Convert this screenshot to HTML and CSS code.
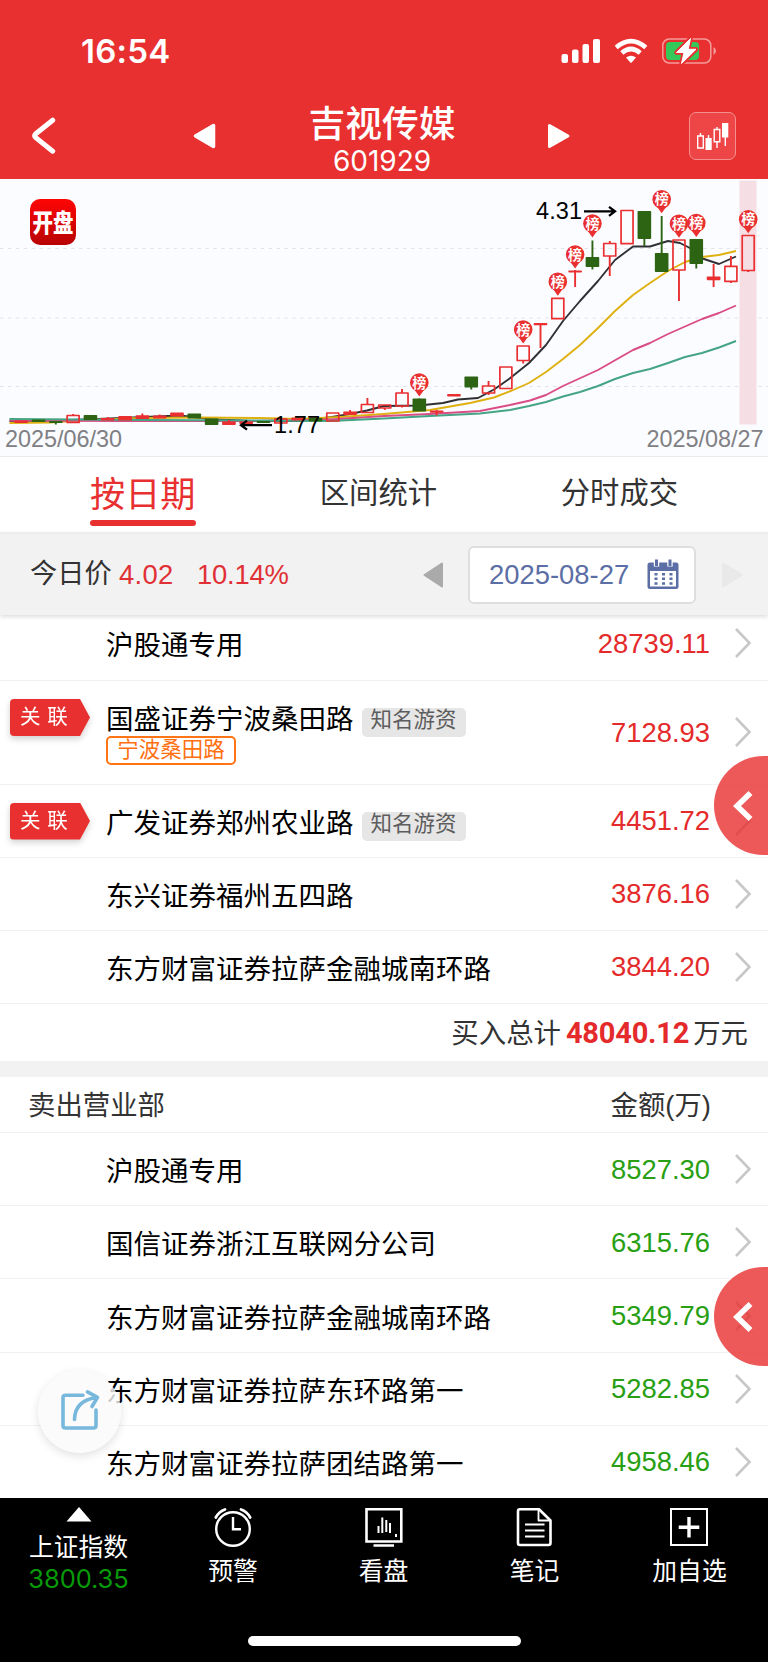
FILE: index.html
```
<!DOCTYPE html>
<html lang="zh">
<head>
    <meta charset="UTF-8">
    <meta name="viewport" content="width=device-width, initial-scale=1.0">
    <title>吉视传媒 601929</title>
    <link rel="stylesheet" href="styles.css">
</head>
<body>
<svg class="defs" width="0" height="0">
    <symbol id="arrow" viewBox="0 0 18 32"><path d="M2 2 L15.5 16 L2 30" fill="none" stroke="#c8c8c8" stroke-width="2.6"/></symbol>
</svg>

<header class="header">
    <div class="status-bar">
        <span class="time">16:54</span>
        <svg class="status-icons" width="160" height="30" viewBox="0 0 160 30">
            <!-- 信号 -->
            <g fill="#fff">
                <rect x="1.5" y="18" width="6.5" height="9" rx="2"/>
                <rect x="12" y="13.5" width="6.5" height="13.5" rx="2"/>
                <rect x="22.5" y="8" width="6.5" height="19" rx="2"/>
                <rect x="33" y="3" width="7" height="24" rx="2"/>
            </g>
            <!-- WiFi -->
            <g fill="none" stroke="#fff" stroke-width="4.6">
                <path d="M56.2 11.4 Q71 -1.2 85.8 11.4"/>
                <path d="M61.8 17 Q71 9 80.2 17"/>
            </g>
            <path d="M66 21.6 Q71 17.8 76 21.6 L71.7 26.5 Q71 27.2 70.3 26.5Z" fill="#fff"/>
            <!-- 电池 -->
            <rect x="102.8" y="3" width="48" height="24" rx="6.5" fill="none" stroke="#f59a9a" stroke-width="1.5"/>
            <rect x="106" y="6" width="33" height="18" rx="4" fill="#34c759"/>
            <path d="M153.5 11 Q156 12.5 156 15 Q156 17.5 153.5 19Z" fill="#f59a9a"/>
            <path d="M130.5 2.5 L116.5 16.5 H124 L121.5 27.5 L136 13.3 H128.2Z" fill="#fff" stroke="#e93030" stroke-width="4.5" stroke-linejoin="round"/>
            <path d="M130.5 2.5 L116.5 16.5 H124 L121.5 27.5 L136 13.3 H128.2Z" fill="#fff" stroke="#fff" stroke-width="1" stroke-linejoin="round"/>
        </svg>
    </div>
    <div class="nav-bar">
        <svg class="back" width="24" height="38" viewBox="0 0 24 38"><path d="M20.7 3.2 L3.5 17 Q1.7 18.7 3.5 20.4 L20.7 34.2" fill="none" stroke="#fff" stroke-width="5" stroke-linecap="round"/></svg>
        <svg width="23" height="26" viewBox="0 0 23 26"><path d="M2.5 13 L20.5 2.5 V23.5Z" fill="#fff" stroke="#fff" stroke-width="3.5" stroke-linejoin="round"/></svg>
        <div class="stock">
            <h1 class="stock-name">吉视传媒</h1>
            <div class="stock-code">601929</div>
        </div>
        <svg width="23" height="26" viewBox="0 0 23 26"><path d="M20 13 L1.5 2.5 V23.5Z" fill="#fff" stroke="#fff" stroke-width="3" stroke-linejoin="round"/></svg>
        <div class="kline-btn">
            <svg width="33" height="29" viewBox="0 0 33 29">
                <g fill="none" stroke="#fff" stroke-width="1.4">
                    <path d="M4.5 11 V14 M1.7 14 H7.3 V26 H1.7Z M12.5 13 V16 M21 5 V7.5 M21 20 V26 M18.2 7.5 H23.8 V19.7 H18.2Z M29.3 15 V24"/>
                </g>
                <path d="M9.5 16 H15.7 V28 H9.5Z M26 1 H32.3 V15.5 H26Z" fill="#fff"/>
            </svg>
        </div>
    </div>
</header>

<section class="chart">
    <svg id="kline" width="768" height="276" viewBox="0 4 768 276">
        <defs>
            <linearGradient id="logo" x1="0" y1="0" x2="0" y2="1">
                <stop offset="0" stop-color="#ff0505"/>
                <stop offset="1" stop-color="#b80404"/>
            </linearGradient>
        </defs>
        <path class="grid-line" d="M0 72.5 H768 M0 142 H768 M0 210.5 H768"/>
        <rect x="739.5" y="4.5" width="17" height="244" fill="#f6dfe4"/>
        <rect x="30" y="23" width="46" height="46" rx="10" fill="url(#logo)"/>
        <text class="logo-text" transform="translate(32.6 55.5) scale(1 1.22)">开盘</text>
        <polyline class="ma" stroke="#303034" points="9.5,245 60,244.5 110,242.5 145,241 180,239.5 210,243 250,245 300,245 332,241 350,238 367,234.5 384,230 419,229.5 443,227 458,223.5 478,222 494,213.5 509,203 529,187 546,169 563,145 580,125 598,105 615,84 633,70.5 650,70.5 668,65 680,67 690,72 701,82 719,88 736,80.5"/>
        <polyline class="ma" stroke="#deb010" points="9.5,247 50,246.5 80,244.5 140,242 200,241.5 260,242 300,243 340,241 384,238 430,234 470,227 494,221.5 512,214.5 529,207 546,196 563,183 580,169 598,152 615,135 633,119 650,107 668,95 685,86 702,81 719,79 736,75"/>
        <polyline class="ma" stroke="#d94c86" points="9.5,244.5 120,245 250,245 330,243.5 384,240 430,238 480,235 510,229 530,224.5 546,219 563,210 598,194 633,174 650,167 668,158 702,143 719,137 736,129.5"/>
        <polyline class="ma" stroke="#45a484" points="9.5,243 150,244 250,244.5 330,245 384,242.5 430,240 480,237.5 510,234 529,230 546,226 563,220.5 580,216 598,210 615,203 633,197 650,193 668,187 685,181 702,177 719,171.5 736,165"/>
        <g id="candles"></g>
        <path class="pointer" d="M241 249.2 H272 M247 244.7 L241 249.2 L247 253.7"/>
        <text class="price" x="274" y="257">1.77</text>
        <path class="pointer" d="M584 35.3 H615 M609 30.8 L615 35.3 L609 39.8"/>
        <text class="price" x="536" y="43.3">4.31</text>
        <text class="day" x="5" y="271">2025/06/30</text>
        <text class="day" x="763.5" y="271" text-anchor="end">2025/08/27</text>
    </svg>
</section>

<nav class="tabs">
    <a class="tab active">按日期</a>
    <a class="tab">区间统计</a>
    <a class="tab">分时成交</a>
</nav>

<div class="filter">
    <span class="today">今日价</span>
    <span class="today-price">4.02</span>
    <span class="today-rate">10.14%</span>
    <svg class="prev" width="21" height="26" viewBox="0 0 21 26"><path d="M1.5 13 L19 1.5 V24.5Z" fill="#aaa" stroke="#aaa" stroke-width="2" stroke-linejoin="round"/></svg>
    <div class="date-box">
        <span>2025-08-27</span>
        <svg width="32" height="31" viewBox="0 0 32 31">
            <path d="M3 3.5 H29 Q31.5 3.5 31.5 6 V27.5 Q31.5 30 29 30 H3 Q0.5 30 0.5 27.5 V6 Q0.5 3.5 3 3.5Z" fill="#5b6ea5"/>
            <rect x="3" y="12" width="26" height="15.5" fill="#fff"/>
            <path d="M9.5 0.5 V7.5 M23 0.5 V7.5" stroke="#fff" stroke-width="5.4"/>
            <path d="M9.5 0.5 V7 M23 0.5 V7" stroke="#5b6ea5" stroke-width="3"/>
            <path d="M7.5 15.3 H26 M7.5 19.8 H26 M7.5 24.5 H26" stroke="#5b6ea5" stroke-width="2.6" stroke-dasharray="3 4.5"/>
        </svg>
    </div>
    <svg class="next" width="21" height="26" viewBox="0 0 21 26"><path d="M20 13 L1 1.5 V24.5Z" fill="#e9e9e9" stroke="#e9e9e9" stroke-width="2" stroke-linejoin="round"/></svg>
</div>

<main>
    <section class="buy">
        <div class="row first">
            <div class="name">沪股通专用</div>
            <div class="amount">28739.11</div>
            <svg class="arrow"><use href="#arrow"/></svg>
        </div>
        <div class="row tall">
            <div class="flag"><span>关 联</span></div>
            <div class="name">国盛证券宁波桑田路<span class="tag">知名游资</span><div class="alias">宁波桑田路</div></div>
            <div class="amount">7128.93</div>
            <svg class="arrow"><use href="#arrow"/></svg>
        </div>
        <div class="row">
            <div class="flag"><span>关 联</span></div>
            <div class="name">广发证券郑州农业路<span class="tag">知名游资</span></div>
            <div class="amount">4451.72</div>
            <svg class="arrow"><use href="#arrow"/></svg>
        </div>
        <div class="row">
            <div class="name">东兴证券福州五四路</div>
            <div class="amount">3876.16</div>
            <svg class="arrow"><use href="#arrow"/></svg>
        </div>
        <div class="row">
            <div class="name">东方财富证券拉萨金融城南环路</div>
            <div class="amount">3844.20</div>
            <svg class="arrow"><use href="#arrow"/></svg>
        </div>
        <div class="total">买入总计<b>48040.12</b>万元</div>
    </section>

    <section class="sell">
        <div class="section-head"><span>卖出营业部</span><span>金额(万)</span></div>
        <div class="row">
            <div class="name">沪股通专用</div>
            <div class="amount">8527.30</div>
            <svg class="arrow"><use href="#arrow"/></svg>
        </div>
        <div class="row">
            <div class="name">国信证券浙江互联网分公司</div>
            <div class="amount">6315.76</div>
            <svg class="arrow"><use href="#arrow"/></svg>
        </div>
        <div class="row">
            <div class="name">东方财富证券拉萨金融城南环路</div>
            <div class="amount">5349.79</div>
            <svg class="arrow"><use href="#arrow"/></svg>
        </div>
        <div class="row">
            <div class="name">东方财富证券拉萨东环路第一</div>
            <div class="amount">5282.85</div>
            <svg class="arrow"><use href="#arrow"/></svg>
        </div>
        <div class="row">
            <div class="name">东方财富证券拉萨团结路第一</div>
            <div class="amount">4958.46</div>
            <svg class="arrow"><use href="#arrow"/></svg>
        </div>
    </section>
</main>

<footer class="bottom-bar">
    <div class="index">
        <svg width="26" height="15" viewBox="0 0 26 15"><path d="M13 0 L25.5 14.5 H0.5Z" fill="#fff"/></svg>
        <div class="index-name">上证指数</div>
        <div class="index-value">3800.35</div>
    </div>
    <div class="item">
        <svg width="40" height="40" viewBox="0 0 40 40" fill="none" stroke="#fff" stroke-width="2.4" stroke-linecap="round">
            <circle cx="20" cy="22" r="16.8"/>
            <path d="M20 10 V22.3 H28" stroke-linecap="butt"/>
            <path d="M2.8 10.5 Q6 4.5 12 2.5 M28 2.5 Q34 4.5 37.2 10.5" stroke-width="2.8"/>
        </svg>
        <span>预警</span>
    </div>
    <div class="item">
        <svg width="40" height="40" viewBox="0 0 40 40" fill="none" stroke="#fff" stroke-width="2.6">
            <path d="M2.5 2.3 H37.3 V34.5 H2.5Z M9.5 38.5 H30"/>
            <path d="M14.5 19 V26 M18.3 10.5 V26 M22.3 13 V25 M26 16 V26 M32 27 V30" stroke-width="2"/>
        </svg>
        <span>看盘</span>
    </div>
    <div class="item">
        <svg width="40" height="40" viewBox="0 0 40 40" fill="none" stroke="#fff" stroke-width="2.6" stroke-linejoin="round">
            <path d="M5 2.2 H24 L35.5 13.5 V36 Q35.5 38 33.5 38 H5 Q3 38 3 36 V4.2 Q3 2.2 5 2.2Z"/>
            <path d="M23.5 3 V13.5 H35" stroke-width="1.8"/>
            <path d="M10 17.5 H29.5 M10 23.5 H29.5 M10 29.5 H29.5" stroke-width="2"/>
        </svg>
        <span>笔记</span>
    </div>
    <div class="item">
        <svg width="40" height="40" viewBox="0 0 40 40" fill="none" stroke="#fff">
            <rect x="1" y="2" width="36" height="36" stroke-width="2"/>
            <path d="M19 10 V30.5 M8.7 20.3 H29.3" stroke-width="3.4"/>
        </svg>
        <span>加自选</span>
    </div>
    <div class="home-line"></div>
</footer>

<!-- 悬浮按钮 -->
<div class="side-btn side-top"><svg width="20" height="32" viewBox="0 0 20 32"><path d="M17.5 3 L4 16 L17.5 29" fill="none" stroke="#fff" stroke-width="5.6"/></svg></div>
<div class="side-btn side-bottom"><svg width="20" height="32" viewBox="0 0 20 32"><path d="M17.5 3 L4 16 L17.5 29" fill="none" stroke="#fff" stroke-width="5.6"/></svg></div>
<div class="share">
    <svg width="40" height="42" viewBox="0 0 40 42" fill="none" stroke="#78b8dc" stroke-width="3.6" stroke-linecap="round" stroke-linejoin="round">
        <path d="M23 6.2 H5.5 Q3 6.2 3 8.7 V36.5 Q3 39 5.5 39 H33.5 Q36 39 36 36.5 V21"/>
        <path d="M14.5 30.5 Q15 11 37 8.5 M27.5 2.8 L37.5 8.3 L32 17.5"/>
    </svg>
</div>

<script>
// [颜色, 实体顶, 实体底, 最高, 最低, 空心, 标记]
const data = [
    ["r", 244.5, 247], ["g", 243.5, 246], ["g", 245, 247, 245, 248.5],
    ["r", 239.5, 246.5, 238, 247, 1], ["g", 239, 244], ["r", 242, 244.5, 241, 244],
    ["r", 240, 244.5], ["r", 239.3, 243, 237.5, 243], ["r", 239.5, 242.5, 238.5, 242],
    ["r", 236.5, 240.5], ["g", 237.5, 242.5], ["g", 242.5, 249], ["r", 245.5, 249, 244, 249],
    ["r", 245.5, 248], ["g", 245, 247], ["r", 243, 247, 242, 248, 1], ["r", 241.5, 244.5],
    ["g", 242, 245.5], ["r", 237, 245, 237, 245, 1], ["r", 235.5, 239, 234, 239],
    ["r", 228.5, 236.5, 222, 237, 1], ["r", 229, 232, 229, 234, 1], ["r", 217, 230, 213, 231.5, 1],
    ["g", 222.5, 235.5, 222.5, 235, 0, 206.5], ["r", 234.5, 236.8, 234, 239.5], ["r", 218, 220.5],
    ["g", 200.5, 211.5, 201, 213.5], ["r", 210, 217, 205, 219, 1], ["r", 191, 212.5, 191, 212, 1],
    ["r", 170, 184.5, 170, 187.5, 1, 153.5], ["r", 147, 149.3, 147, 172], ["r", 122.3, 142.7, 123, 142, 1, 105.7],
    ["r", 94.5, 96.5, 94, 111, 0, 78.5], ["g", 81, 91, 64.5, 93.5, 0, 47.5], ["r", 67.5, 80, 65, 100, 1],
    ["r", 34.5, 67.7, 35, 67, 1], ["g", 35, 63, 35, 70], ["g", 77, 96, 40, 96, 0, 23.3],
    ["r", 64, 94, 64, 125, 1, 47.7], ["g", 63, 88, 63, 92.5, 0, 47], ["r", 100.5, 104.3, 88, 111],
    ["r", 90.3, 105.3, 80, 107, 1], ["r", 59.5, 94.5, 59, 96, 1, 43.3]
];
const colors = { r: "#e92f30", g: "#2d6413" };
let svg = "";
data.forEach(([c, top, bottom, high, low, hollow, mark], i) => {
    const x = 21.2 + 17.31 * i;
    const color = colors[c];
    if (high !== undefined) {
        // 空心实体不画穿过中间的影线
        const d = hollow ? `M${x} ${high} V${top} M${x} ${bottom} V${low}` : `M${x} ${high} V${low}`;
        svg += `<path d="${d}" stroke="${color}" stroke-width="1.9"/>`;
    }
    if (hollow) {
        svg += `<rect x="${x - 6}" y="${top}" width="12" height="${bottom - top}" fill="none" stroke="${color}" stroke-width="1.7" stroke-linejoin="round"/>`;
    } else {
        svg += `<rect x="${x - 6.8}" y="${top}" width="13.6" height="${bottom - top}" rx="0.8" fill="${color}"/>`;
    }
    if (mark) {
        svg += `<circle cx="${x}" cy="${mark}" r="9.3" fill="#e92f30"/>
            <path d="M${x - 5} ${mark + 7} L${x} ${mark + 14} L${x + 5} ${mark + 7}Z" fill="#e92f30"/>
            <text class="mark" x="${x}" y="${mark + 5}">榜</text>`;
    }
});
document.getElementById("candles").innerHTML = svg;
</script>
</body>
</html>
```

FILE: styles.css
```
* {
    box-sizing: border-box;
}
body {
    position: relative;
    width: 768px;
    height: 1663px;
    margin: 0;
    overflow: hidden;
    background: #fff;
    color: #000;
    font-family: "Liberation Sans", "Noto Sans CJK SC", sans-serif;
    font-size: 27.4px;
}
svg {
    display: block;
    flex: none;
}
.defs {
    position: absolute;
}

/* 顶部 */
.header {
    height: 179px;
    background: #e93030;
    color: #fff;
}
.status-bar {
    display: flex;
    justify-content: space-between;
    height: 98px;
    padding: 36px 48px 0 81px;
}
.time {
    font: 600 33px/30px Inter, sans-serif;
    letter-spacing: 0.2px;
}
.nav-bar {
    display: flex;
    align-items: center;
    height: 76px;
    padding: 0 32px;
}
.back {
    margin-right: 137px;
}
.stock {
    flex: 1;
    padding-top: 8px;
    text-align: center;
}
.stock-name {
    margin: 0;
    font-size: 36.8px;
    font-weight: 500;
    line-height: 42px;
}
.stock-code {
    font: 400 28px/30px Inter, sans-serif;
    letter-spacing: 0;
}
.kline-btn {
    display: flex;
    align-items: center;
    justify-content: center;
    width: 47px;
    height: 48px;
    margin-left: 118px;
    border: 1px solid #f58f8f;
    border-radius: 7px;
    background: #ee4646;
}

/* K线图 */
.chart {
    height: 278px;
    padding-top: 1px;
    border-bottom: 1px solid #ebebed;
    background: #fbfcff;
}
.grid-line {
    stroke: #e2e3e8;
    stroke-width: 1;
    stroke-dasharray: 3.5 4.4;
}
.ma {
    fill: none;
    stroke-width: 1.9;
    stroke-linejoin: round;
}
.pointer {
    fill: none;
    stroke: #000;
    stroke-width: 2.3;
}
.price {
    font-size: 23.5px;
    letter-spacing: 0.1px;
}
.day {
    fill: #808084;
    font-size: 23.4px;
}
.logo-text {
    fill: #fff;
    font-size: 20.5px;
    font-weight: 900;
}
.mark {
    fill: #fff;
    font-size: 14px;
    font-weight: 700;
    text-anchor: middle;
}

/* 标签 */
.tabs {
    display: flex;
    height: 75px;
    padding: 0 90px;
    justify-content: space-between;
}
.tab {
    padding-top: 13px;
    color: #333;
    font-size: 29.3px;
    line-height: 46px;
}
.tab.active {
    display: flex;
    flex-direction: column;
    width: 106px;
    height: 69px;
    color: #e93030;
    font-size: 35.2px;
    line-height: 50px;
    white-space: nowrap;
}
.tab.active::after {
    content: "";
    height: 6px;
    border-radius: 3px;
    background: #e93030;
}

/* 日期栏 */
.filter {
    position: relative;
    display: flex;
    align-items: center;
    height: 83px;
    padding-left: 30px;
    border-top: 2px solid #ededed;
    background: #f2f2f2;
    box-shadow: 0 2px 4px rgba(0, 0, 0, 0.13);
    color: #e13035;
}
.today {
    width: 89px;
    color: #333;
    font-size: 27.2px;
    line-height: 36px;
    padding-bottom: 1px;
}
.today-price {
    width: 78px;
    padding-top: 1px;
    letter-spacing: 0.3px;
}
.today-rate {
    padding-top: 1px;
    letter-spacing: -0.2px;
}
.prev {
    margin-left: auto;
}
.date-box {
    display: flex;
    align-items: center;
    justify-content: space-between;
    width: 228px;
    height: 58px;
    margin: 0 26px 0 24px;
    padding: 1px 15px 1px 19px;
    border: 2px solid #dedede;
    border-radius: 6px;
    background: #fff;
    color: #5b6ea5;
}
.next {
    margin-right: 25px;
}

/* 列表 */
.row {
    position: relative;
    display: flex;
    align-items: center;
    height: 73.1px;
    padding-left: 106px;
    padding-right: 16px;
    border-bottom: 1.5px solid #f2f2f2;
}
.row.first {
    height: 66px;
    padding-bottom: 9px;
}
.row.tall {
    height: 103.5px;
}
.name {
    flex: 1;
    padding-top: 6px;
    font-size: 27.5px;
    line-height: 36px;
    white-space: nowrap;
}
.tall .name {
    padding-top: 2px;
}
.amount {
    margin-right: 24px;
    padding-top: 1px;
    color: #e42a2b;
}
.sell .amount {
    color: #299f13;
}
.arrow {
    width: 18px;
    height: 32px;
}
.tag {
    display: inline-block;
    height: 29px;
    margin-left: 8px;
    padding: 0 9px;
    border-radius: 5px;
    background: #e6e6e6;
    color: #5d5d5d;
    font-size: 21.5px;
    line-height: 25px;
    vertical-align: 1.5px;
}
.alias {
    width: 130px;
    height: 29px;
    margin-top: -2px;
    border: 2px solid #ff7414;
    border-radius: 5px;
    color: #ff7010;
    font-size: 21.5px;
    line-height: 25px;
    text-align: center;
}
/* 角标挂在名称左侧 */
.flag {
    position: absolute;
    left: 10px;
    top: 18px;
    filter: drop-shadow(0 3px 3px rgba(0, 0, 0, 0.18));
}
.flag span {
    display: block;
    width: 80px;
    height: 37px;
    padding-left: 10px;
    border-radius: 4px;
    background: #e93030;
    clip-path: polygon(0 0, 70px 0, 80px 50%, 70px 100%, 0 100%);
    color: #fff;
    font-size: 20.5px;
    line-height: 36px;
    word-spacing: 1px;
    white-space: pre;
}
.total {
    height: 57.5px;
    padding-right: 20px;
    color: #333;
    line-height: 60px;
    text-align: right;
}
.total b {
    margin: 0 4px 0 5px;
    color: #e42a2b;
    font: 700 29px/50px Roboto, sans-serif;
    letter-spacing: -0.2px;
}
.sell {
    border-top: 16px solid #f2f2f2;
}
.section-head {
    display: flex;
    justify-content: space-between;
    height: 56px;
    padding: 0 57px 0 28px;
    border-bottom: 1.5px solid #f2f2f2;
    color: #333;
    line-height: 58px;
}

/* 底部 */
.bottom-bar {
    position: absolute;
    left: 0;
    top: 1498px;
    width: 768px;
    height: 164px;
    display: grid;
    grid-template-columns: 157px 152px 149px 153px 157px;
    background: #000;
    color: #fff;
    font-size: 24.8px;
    text-align: center;
}
.index {
    display: flex;
    flex-direction: column;
    align-items: center;
    padding-top: 9px;
}
.index-name {
    margin-top: 8px;
    line-height: 36px;
}
.index-value {
    color: #089a08;
    font: 400 25.5px/25px Inter, sans-serif;
    letter-spacing: -0.1px;
}
.item {
    display: flex;
    flex-direction: column;
    align-items: center;
    padding-top: 9px;
}
.item span {
    margin-top: 7px;
    line-height: 36px;
}
.home-line {
    position: absolute;
    left: 248px;
    top: 138px;
    width: 273px;
    height: 10px;
    border-radius: 5px;
    background: #fff;
}

/* 悬浮 */
.side-btn {
    position: absolute;
    right: 0;
    display: flex;
    align-items: center;
    width: 54px;
    height: 99px;
    padding-left: 19px;
    border-radius: 50px 0 0 50px;
    background: rgba(233, 48, 48, 0.8);
}
.side-top {
    top: 756px;
}
.side-bottom {
    top: 1267px;
}
.share {
    position: absolute;
    left: 38px;
    top: 1370px;
    display: flex;
    align-items: center;
    justify-content: center;
    width: 83px;
    height: 83px;
    padding-bottom: 4px;
    border-radius: 50%;
    background: rgba(250, 250, 250, 0.8);
    box-shadow: 0 3px 10px rgba(0, 0, 0, 0.12);
}
```
